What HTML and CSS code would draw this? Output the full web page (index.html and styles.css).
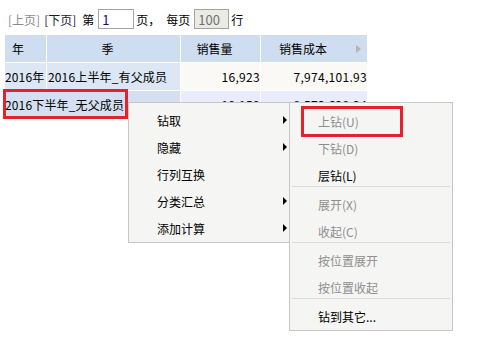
FILE: index.html
```html
<!DOCTYPE html>
<html lang="zh-CN">
<head>
    <meta charset="UTF-8">
    <title>报表钻取</title>
    <link rel="stylesheet" href="styles.css">
</head>
<body>
    <div class="pager">
        <span class="pg-link disabled">[上页]</span>
        <span class="pg-link">[下页]</span>
        <span class="pg-text">第</span>
        <input class="pg-input" type="text" value="1">
        <span class="pg-text">页，</span>
        <span class="pg-text">每页</span>
        <input class="pg-input pg-size" type="text" value="100" disabled>
        <span class="pg-text">行</span>
    </div>

    <table class="grid">
        <thead>
            <tr>
                <th class="col-year">年</th>
                <th class="col-season">季</th>
                <th class="col-qty">销售量</th>
                <th class="col-cost">销售成本<span class="sort-arrow"></span></th>
            </tr>
        </thead>
        <tbody>
            <tr>
                <td class="row-head">2016年</td>
                <td class="row-head">2016上半年_有父成员</td>
                <td class="num">16,923</td>
                <td class="num">7,974,101.93</td>
            </tr>
            <tr class="alt">
                <td class="row-head merged" colspan="2">2016下半年_无父成员</td>
                <td class="num">19,159</td>
                <td class="num">8,573,628.34</td>
            </tr>
        </tbody>
    </table>

    <!-- context menu -->
    <div class="menu main-menu">
        <div class="menu-item has-sub">钻取</div>
        <div class="menu-item has-sub">隐藏</div>
        <div class="menu-item">行列互换</div>
        <div class="menu-item has-sub">分类汇总</div>
        <div class="menu-item has-sub">添加计算</div>
    </div>

    <div class="menu sub-menu">
        <div class="menu-item off">上钻(U)</div>
        <div class="menu-item off">下钻(D)</div>
        <div class="menu-item">层钻(L)</div>
        <div class="menu-sep"></div>
        <div class="menu-item off">展开(X)</div>
        <div class="menu-item off">收起(C)</div>
        <div class="menu-sep"></div>
        <div class="menu-item off">按位置展开</div>
        <div class="menu-item off">按位置收起</div>
        <div class="menu-sep"></div>
        <div class="menu-item">钻到其它...</div>
    </div>

    <!-- annotation boxes -->
    <div class="mark mark-cell"></div>
    <div class="mark mark-item"></div>
</body>
</html>
```

FILE: styles.css
```css
* { margin: 0; padding: 0; box-sizing: border-box; }
body { font-family: "Noto Sans CJK SC", "Noto Sans", sans-serif; font-size: 12px; color: #000; background: #fff; position: relative; width: 489px; height: 343px; overflow: hidden; }

.pager { display: flex; align-items: center; height: 20px; margin: 9px 0 5px 8px; }
.pg-link { color: #1a1a2e; margin-right: 4px; }
.pg-link.disabled { color: #8a8a8a; }
.pg-text { margin: 0 4px 0 2px; }
.pg-input { width: 36px; height: 20px; border: 1px solid #a3a3a3; font: inherit; font-size: 13px; color: #2a0a5c; padding: 0 3px; background: #fff; }
.pg-size { width: 35px; background: #ebebe4; color: #707070; }

.grid { border-collapse: separate; border-spacing: 1px; margin-left: 4px; }
.grid th, .grid td { height: 27px; font-weight: normal; white-space: nowrap; padding: 0; }
.grid th { background: #cfddf0; text-align: center; padding-right: 12px; }
.grid th.col-year { width: 41px; text-align: left; padding: 0 0 0 7px; }
.grid th.col-season { width: 133px; }
.grid th.col-qty { width: 79px; }
.grid th.col-cost { width: 106px; padding-right: 22px; position: relative; }
.sort-arrow { position: absolute; right: 6px; top: 10px; border-left: 5px solid #b3b3b3; border-top: 4px solid transparent; border-bottom: 4px solid transparent; }

.row-head { background: #dce6f4; letter-spacing: 0.15px; }
.grid td.row-head + td.row-head { padding-left: 1px; }
.merged { background: #d4e0f1; }
.num { background: #faf9f6; text-align: right; padding-right: 1px; letter-spacing: 0.3px; }
.alt .num { background: #e8ecfc; }

.menu { position: absolute; background: #f5f5f3; border: 1px solid #c6c6c6; padding-top: 4px; }
.main-menu { left: 128px; top: 102px; width: 162px; }
.sub-menu { left: 289px; top: 102px; width: 164px; padding-top: 5px; }
.menu-item { position: relative; height: 27px; line-height: 27px; padding-left: 28px; color: #000; }
.menu-item.off { color: #8e8e8e; }
.menu-item.has-sub::after { content: ""; position: absolute; right: 2px; top: 9px; border-left: 4px solid #000; border-top: 4px solid transparent; border-bottom: 4px solid transparent; }
.menu-sep { height: 1px; margin: -3px 2px 4px; background: #dadada; }

.mark { position: absolute; border: 3px solid #e4222b; }
.mark-cell { left: 3px; top: 89px; width: 125px; height: 30px; }
.mark-item { left: 301px; top: 106px; width: 102px; height: 31px; }
```
